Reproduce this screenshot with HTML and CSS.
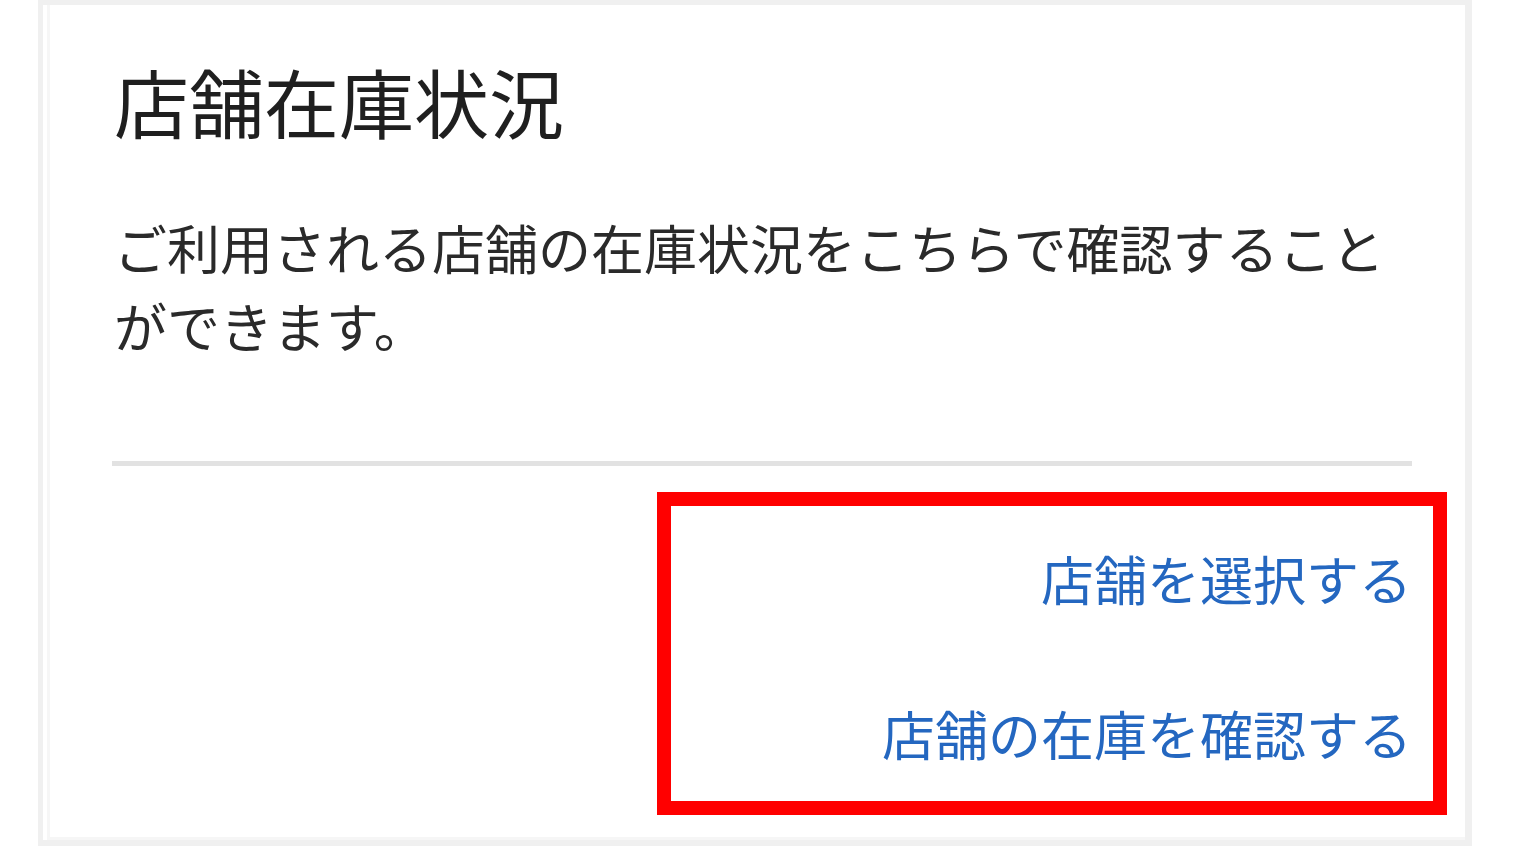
FILE: index.html
```html
<!DOCTYPE html>
<html lang="ja">
<head>
<meta charset="utf-8">
<title>店舗在庫状況</title>
<link rel="stylesheet" href="styles.css">
</head>
<body>
<div class="frame">
  <div class="card">
    <h2 class="title">店舗在庫状況</h2>
    <p class="desc">ご利用される店舗の在庫状況をこちらで確認することができます。</p>
    <hr class="divider">
    <div class="links">
      <a class="link" href="#">店舗を選択する</a>
      <a class="link" href="#">店舗の在庫を確認する</a>
    </div>
  </div>
  <div class="highlight"></div>
</div>
</body>
</html>
```
FILE: styles.css
```css
html, body {
  margin: 0;
  padding: 0;
  background: #ffffff;
}
body {
  font-family: "Noto Sans CJK JP", "Noto Sans", sans-serif;
  color: #222222;
  width: 1518px;
  height: 846px;
  overflow: hidden;
}
.frame {
  position: relative;
  margin-left: 38px;
  width: 1434px;
  height: 846px;
  box-sizing: border-box;
  border: 5px solid #f0f0f0;
  border-right-width: 7px;
  border-bottom-width: 6px;
  background: #ffffff;
}
.card {
  box-sizing: border-box;
  height: 100%;
  margin-left: 4px;
  border-left: 3px solid #f6f6f6;
  border-bottom: 3px solid #f6f6f6;
  padding: 51px 53px 0 64px;
}
.title {
  margin: 0;
  font-size: 75px;
  line-height: 90px;
  font-weight: 400;
  color: #1f1f1f;
}
.desc {
  margin: 62px 0 0;
  font-size: 53px;
  line-height: 78px;
  color: #2a2a2a;
}
.divider {
  margin: 97px 0 0 -2px;
  border: 0;
  height: 5px;
  background: #e2e2e2;
}
.links {
  display: flex;
  flex-direction: column;
  align-items: flex-end;
  gap: 77px;
  margin-top: 73px;
}
.link {
  font-size: 53px;
  line-height: 78px;
  color: #2467c0;
  text-decoration: none;
}
.highlight {
  position: absolute;
  left: 614px;
  top: 487px;
  width: 790px;
  height: 323px;
  box-sizing: border-box;
  border: 14px solid #ff0000;
}
```
